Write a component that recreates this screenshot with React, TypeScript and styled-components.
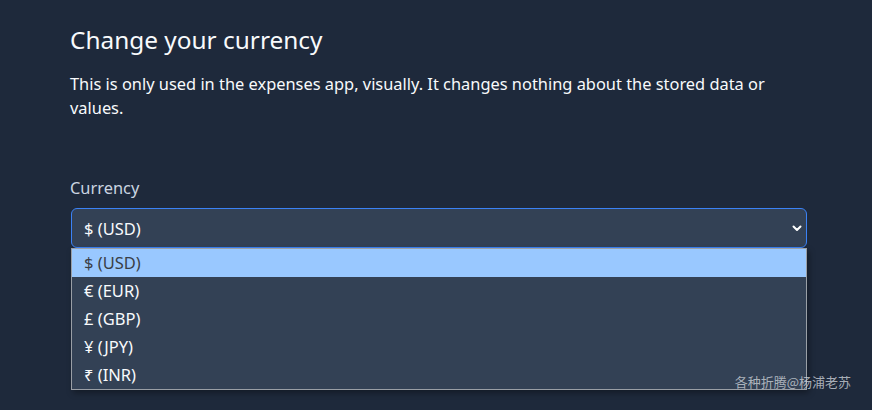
import React from "react";
import styled, { createGlobalStyle } from "styled-components";

const Global = createGlobalStyle`
  html, body { margin: 0; padding: 0; background: #1e293b; }
  body { font-family: "Noto Sans", "Open Sans", sans-serif; color: #f8fafc; }
`;

const Page = styled.div`
  width: 872px;
  height: 410px;
  background: #1e293b;
  position: relative;
  overflow: hidden;
  box-sizing: border-box;
  padding: 22px 66px 0 70px;
`;

const Title = styled.h2`
  margin: 0;
  font-size: 24.4px;
  font-weight: 400;
  line-height: 36px;
  color: #f8fafc;
`;

const Text = styled.p`
  margin: 14px 0 0;
  font-size: 16.4px;
  line-height: 24px;
  color: #f8fafc;
  max-width: 736px;
`;

const Field = styled.div`
  margin-top: 56px;
  display: flex;
  flex-direction: column;
  gap: 8px;
`;

const Label = styled.label`
  font-size: 16.4px;
  line-height: 24px;
  color: #cbd5e1;
`;

const SelectWrap = styled.div`
  position: relative;
  width: 736px;
  margin-left: 1px;
`;

const Select = styled.div`
  box-sizing: border-box;
  height: 40px;
  display: flex;
  align-items: center;
  justify-content: space-between;
  padding: 0 4px 0 12px;
  background: #334155;
  border: 1px solid #3b82f6;
  border-radius: 6px;
  font-size: 16.5px;
  color: #f8fafc;
`;

const Chevron = styled.svg`
  width: 10px;
  height: 10px;
`;

const Menu = styled.ul`
  position: absolute;
  top: 40px;
  left: 0;
  right: 0;
  margin: 0;
  padding: 0;
  list-style: none;
  background: #334155;
  border: 1px solid #9a9fa6;
  box-shadow: 2px 3px 6px rgba(0, 0, 0, 0.35);
`;

const Option = styled.li<{ $active?: boolean }>`
  height: 28px;
  display: flex;
  align-items: center;
  padding-left: 12px;
  padding-bottom: 1px;
  box-sizing: border-box;
  font-size: 16.5px;
  background: ${(p) => (p.$active ? "#99c8ff" : "transparent")};
  color: ${(p) => (p.$active ? "#3a3f47" : "#f8fafc")};
`;

const Watermark = styled.div`
  position: absolute;
  right: 21px;
  bottom: 19px;
  font-family: "Noto Sans CJK SC", sans-serif;
  font-size: 13px;
  color: rgba(205, 210, 216, 0.8);
`;

const options = ["$ (USD)", "€ (EUR)", "£ (GBP)", "¥ (JPY)", "₹ (INR)"];

export default function App() {
  return (
    <>
      <Global />
      <Page>
        <Title>Change your currency</Title>
        <Text>
          This is only used in the expenses app, visually. It changes nothing about the stored data or
          <br />
          values.
        </Text>
        <Field>
          <Label>Currency</Label>
          <SelectWrap>
            <Select>
              <span>$ (USD)</span>
              <Chevron viewBox="0 0 10 10">
                <path d="M1.5 3.5l3.5 3.5 3.5-3.5" fill="none" stroke="#fff" strokeWidth="2" strokeLinecap="round" strokeLinejoin="round" />
              </Chevron>
            </Select>
            <Menu>
              {options.map((o, i) => (
                <Option key={o} $active={i === 0}>
                  {o}
                </Option>
              ))}
            </Menu>
          </SelectWrap>
        </Field>
        <Watermark>各种折腾@杨浦老苏</Watermark>
      </Page>
    </>
  );
}
